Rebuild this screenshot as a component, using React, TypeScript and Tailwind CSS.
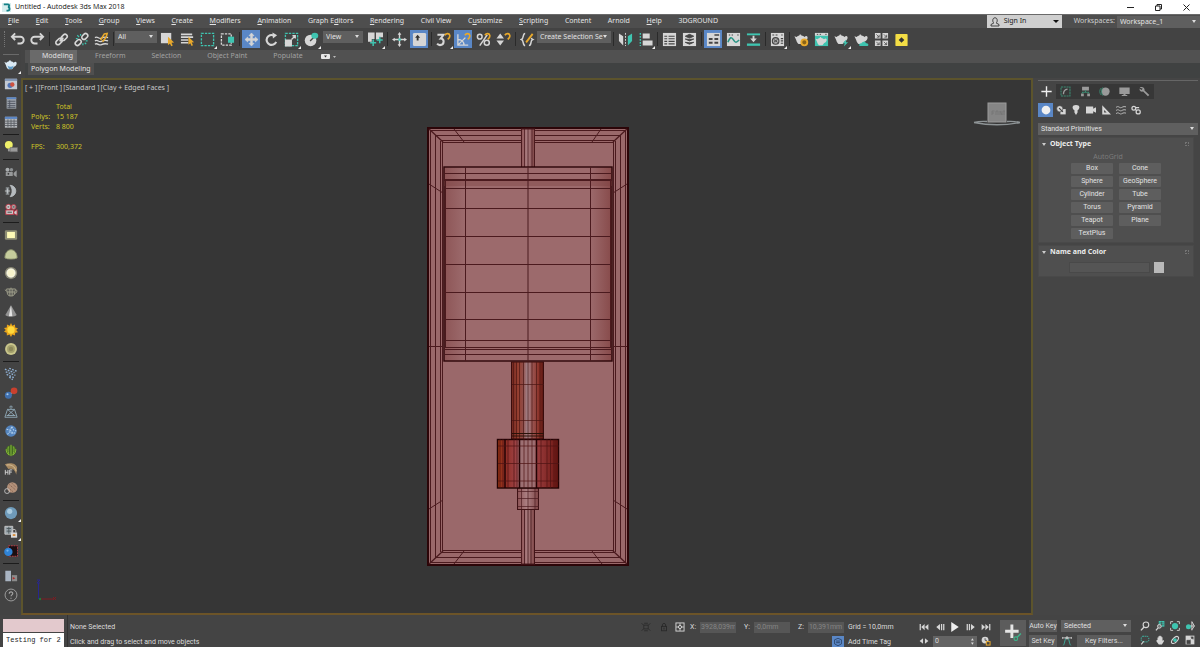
import { useState, type ReactNode } from "react";
import clsx from "clsx";

const UI = "font-['Noto_Sans','Open_Sans',sans-serif]";

const L = "#d6d6d6";
const T = "#3fc4b0";
const Y = "#e8a92c";

/* ---------- icons, all on a 16x16 grid ---------- */

const teapot = (fill: string) => (
  <path
    transform="matrix(1.05 0 0 1.3 -.6 -2.6)"
    d="M1 5.5l2.2.6C4 5.3 5 5 6 4.8c0-1 2-1 2 0 1.500.2 2.600.6 3.200 1.400C13 4.500 15 5.500 14.200 7.500c-.5 1.200-1.600 2-2.900 2.300-.6 1-1.300 1.700-2 2H5.200C4 11 3.200 10 2.800 8.500z"
    fill={fill}
  />
);

const magnet = (
  <path d="M9.500 3.500C11 1 14.500 1.200 14.800 4c.1 1.600-1 2.800-2.300 3.800" fill="none" stroke={Y} strokeWidth="1.800" />
);

const ICONS: Record<string, ReactNode> = {
  undo: <path d="M5.500 1.500L2 5l3.500 3.500M2.500 5H11a3.600 3.600 0 010 7.300H8" fill="none" stroke={L} strokeWidth="2" />,
  redo: <path d="M10.500 1.500L14 5l-3.500 3.500M13.500 5H5a3.600 3.600 0 000 7.300h3" fill="none" stroke={L} strokeWidth="2" />,
  link: (
    <g fill="none" stroke={L} strokeWidth="1.700">
      <rect x="7" y="3.500" width="7.500" height="4.600" rx="2.300" transform="rotate(-45 10.700 5.800)" />
      <rect x="1.500" y="8" width="7.500" height="4.600" rx="2.300" transform="rotate(-45 5.300 10.300)" />
      <path d="M6 10l4-4" />
    </g>
  ),
  unlink: (
    <g fill="none" stroke={L} strokeWidth="1.700">
      <rect x="8" y="2.500" width="7" height="4.600" rx="2.300" transform="rotate(-45 11.500 4.800)" />
      <rect x="1" y="9" width="7" height="4.600" rx="2.300" transform="rotate(-45 4.500 11.300)" />
      <path d="M3.500 3.500l2 2M7 2v2M2 7h2M11.500 11.500l1.500 1.500M9.500 12v2M12.500 9.500h2" stroke={T} strokeWidth="1.300" />
    </g>
  ),
  bindWarp: (
    <g fill="none">
      <path d="M1 6c3-2 4 2 7 .5S12 5 15 6M1 9.500c3-2 4 2 7 .5s4-1.500 7-.5M1 13c3-2 4 2 7 .5s4-1.500 7-.5" stroke={L} strokeWidth="1.400" />
      <path d="M7 8.500l4-6.500 3-.5-1 4-4 5" stroke={Y} strokeWidth="1.700" />
    </g>
  ),
  select: (
    <>
      <rect x="1" y="1" width="11" height="11" fill={L} />
      <path d="M8.500 5l6.500 6.200-2.800.3 1.400 3-1.600.7-1.400-3-2.100 1.900z" fill={Y} />
    </>
  ),
  selectByName: (
    <>
      <path d="M1 2.500h12M1 5.500h13M1 8.500h8M1 11.500h8" stroke={L} strokeWidth="1.700" />
      <path d="M9 5l6 6-2.500.3 1.300 2.900-1.500.7-1.300-2.900-2 1.700z" fill={Y} />
    </>
  ),
  rectRegion: <rect x="1.500" y="1.500" width="13" height="13" fill="none" stroke={T} strokeWidth="1.400" strokeDasharray="2.500 1.200" />,
  windowCross: (
    <>
      <rect x="1.500" y="2" width="10.500" height="12" fill="none" stroke={L} strokeWidth="1.400" strokeDasharray="2.500 1.200" />
      <rect x="8.500" y="5" width="6.500" height="6.500" fill={T} />
    </>
  ),
  move: (
    <path
      d="M8 1l2.700 3H9v3h3V5.300L15 8l-3 2.700V9H9v3h1.700L8 15l-2.700-3H7V9H4v1.700L1 8l3-2.700V7h3V4H5.300z"
      fill={L}
      stroke={L}
      strokeWidth=".6"
    />
  ),
  rotate: (
    <>
      <path d="M10.500 3.700A5.300 5.300 0 1013 10.500" fill="none" stroke={L} strokeWidth="2.200" />
      <path d="M9 .5l5 3-4.500 3.500z" fill={L} />
    </>
  ),
  scale: (
    <>
      <rect x="1.500" y="1.500" width="13" height="13" fill="none" stroke={T} strokeWidth="1.400" strokeDasharray="2.500 1.200" />
      <rect x="1" y="8" width="7.500" height="7.500" fill={L} />
      <path d="M8 8l3.500-3.500M9 4h3v3" fill="none" stroke={L} strokeWidth="1.400" />
    </>
  ),
  place: (
    <>
      <circle cx="7" cy="9" r="6.200" fill={L} />
      <path d="M6.500 9.500l4-4" stroke="#444" strokeWidth="1.500" />
      <ellipse cx="11.500" cy="4" rx="3.700" ry="3.200" fill={T} />
    </>
  ),
  pivot: (
    <>
      <path d="M0 .5h7v7H4v3H0zM8.500.5H16v5h-3.500v2.500h-4z" fill={L} />
      <path d="M5.500 8v7M2.300 11.500h6.400M12.500 5v7M9.300 8.500h6.400" stroke={T} strokeWidth="1.600" />
    </>
  ),
  manipulate: (
    <>
      <path d="M8 2v12M2 8h12" stroke={L} strokeWidth="1.500" />
      <path d="M8 0l2 3H6zM8 16l2-3H6zM0 8l3-2v4zM16 8l-3-2v4z" fill={L} />
      <rect x="6.800" y="6.800" width="2.500" height="2.500" fill={T} />
    </>
  ),
  keyboard: (
    <>
      <rect x="1" y="1" width="14" height="14" rx="1.500" fill={L} />
      <path d="M6 3l2.700 3H7v3H5V6H3.300z" fill="#333" />
    </>
  ),
  snap3: (
    <>
      <path d="M1.500 3h6.500L5 7c4.200-.2 4.400 7-.8 7-1.400 0-2.300-.6-3-1.500" fill="none" stroke={L} strokeWidth="2.200" />
      {magnet}
    </>
  ),
  snapAngle: (
    <>
      <path d="M2 2.500v11.500h11M2 8c4 0 6.500 2.500 6.500 6M2 14l8-8" fill="none" stroke={L} strokeWidth="1.400" />
      {magnet}
    </>
  ),
  snapPercent: (
    <>
      <g fill="none" stroke={L} strokeWidth="1.600">
        <circle cx="4" cy="5" r="2.500" />
        <circle cx="11.500" cy="11.500" r="2.700" />
        <path d="M12 3L4 14.500" />
      </g>
      {magnet}
    </>
  ),
  snapSpinner: (
    <>
      <path d="M4.500 1.500L8.500 7H.5zM4.500 14.500L8.500 9H.5z" fill={L} />
      {magnet}
    </>
  ),
  namedSets: (
    <g fill="none" strokeWidth="1.600">
      <path d="M5.500 1.500C2.500 1.500 4.500 7 1.500 8c3 1 1 6.500 4 6.500M9.500 14.500c3.500 0 1-5.500 4-6.500-.8-.4-1.200-1-1.300-1.800" stroke={L} />
      <path d="M6.500 11L13.500 2" stroke={Y} strokeWidth="2" />
    </g>
  ),
  mirror: (
    <>
      <path d="M1 1.500l4.500 3v10L1 9.500z" fill={L} />
      <path d="M15 1.500l-4.500 3v10L15 9.500z" fill={T} />
      <path d="M8 1v14" stroke={L} strokeDasharray="2 1.200" />
    </>
  ),
  align: (
    <>
      <path d="M2.500 1v14" stroke={T} strokeWidth="1.500" strokeDasharray="2 1.200" />
      <path d="M5 1.500h7.500v5.500H5zM5 9h10.500v5.500H5z" fill={L} />
    </>
  ),
  layers: (
    <>
      <rect x="1" y="1" width="14" height="14" fill={L} />
      <path d="M2.500 4.500h3M7 4.500h6.500M2.500 7.200h3M7 7.200h6.500M2.500 10h3M7 10h6.500M2.500 12.700h3M7 12.700h6.500" stroke="#444" strokeWidth="1.200" />
    </>
  ),
  layerStack: (
    <>
      <rect x="1" y="1" width="14" height="14" fill={L} />
      <path d="M8 2.500l4.500 2L8 6.500l-4.500-2zM3.500 7.500L8 9.500l4.500-2L8 8zM3.500 11L8 13l4.500-2-4.500.5z" fill="#444" stroke="#444" strokeWidth="1" />
    </>
  ),
  ribbon: (
    <>
      <path d="M1 1h14v14H1z" fill={L} />
      <path d="M3 6.500h4v2H3zM9 6.500h4v2H9zM3 10.500h4v2H3zM9 10.500h4v2H9zM9 2.500h5v1.500H9z" fill="#444" />
    </>
  ),
  curve: (
    <>
      <path d="M1 1h14v14H1z" fill={L} />
      <path d="M3 3.200h1.500M6 3.200h1.500M12 3.200h1.500" stroke="#444" strokeWidth="1.200" />
      <path d="M2 11c2.500-6 4-6 6-2.500s3 3 6 0" fill="none" stroke="#2b9484" strokeWidth="1.700" />
    </>
  ),
  schematic: (
    <>
      <path d="M1 2.500h14" stroke={T} strokeWidth="2" />
      <path d="M1 13.500h14" stroke={T} strokeWidth="2.500" />
      <path d="M7 4h2v3h2.500L8 11 4.500 7H7z" fill={L} />
    </>
  ),
  material: (
    <>
      <path d="M1 1h14v14H1z" fill={L} />
      <path d="M2.500 3.200h2M6 3.200h2M12 3.200h1.500M11.500 7h2.500M11.500 9.500h2.500M11.500 12h2.500" stroke="#444" strokeWidth="1.200" />
      <circle cx="6" cy="9.500" r="3.500" fill="#aaa" stroke="#444" strokeWidth="1.200" />
      <path d="M4 8l4 3M4 11l4-3" stroke="#444" />
    </>
  ),
  renderSetup: (
    <>
      {teapot(L)}
      <circle cx="11" cy="11" r="3.200" fill="#8a6417" stroke={Y} strokeWidth="2" />
    </>
  ),
  renderFrame: (
    <>
      <path d="M1 1h14v14H1z" fill={T} />
      <path d="M1 1h14v3H1z" fill={L} />
      <path d="M3 2.500h1.500M6 2.500h1.500M12 2.500h1.500" stroke="#444" />
      <g transform="translate(1.200 3.200) scale(.85)">{teapot(L)}</g>
    </>
  ),
  render: (
    <>
      {teapot(L)}
      <path d="M13 8l-3.500 4h2l-1 3.500 4.500-4.500h-2.200z" fill={T} />
    </>
  ),
  renderCloud: (
    <>
      {teapot(L)}
      <path d="M6 15c-1.500-2.500 1-3.500 2-3 1-2.500 4.500-2 5 0 3 0 3 3 1 3z" fill={T} />
    </>
  ),
  gallery: (
    <>
      <path d="M1 1h6v6H1zM9 1h6v6H9zM1 9h6v6H1zM9 9h6v6H9z" fill={L} />
      <path d="M2.500 2.500l3 3M5.500 3v2.500H3M10.500 2.500l3 3M13.500 3v2.500H11M2.500 10.500l3 3M5.500 11v2.500H3M10.500 10.500l3 3M13.500 11v2.500H11" stroke="#444" fill="none" strokeWidth=".8" />
    </>
  ),
  yellow: (
    <>
      <rect x="1.500" y="2" width="13" height="13" rx="1" fill="#f3dd45" />
      <path d="M8 5.500l3 3-3 3-3-3z" fill="#333" />
    </>
  ),

  /* left bar */
  teapotBlue: <>{teapot("#dcebf5")}<path d="M4 8.500c2 2 5 2 7 0L9.500 12.500h-4z" fill="#5d9cc9" /></>,
  frameBuffer: (
    <>
      <path d="M1 2h14v12H1z" fill="#c3cad4" />
      <path d="M1 2h14v2.500H1z" fill="#8296b5" />
      <circle cx="7" cy="9.500" r="3" fill="#4f74b8" />
      <circle cx="9.500" cy="8.500" r="2.500" fill="#cf5240" />
    </>
  ),
  listPanel: (
    <>
      <path d="M3 1.500h11v13H3z" fill="#9aa0a8" />
      <path d="M3 1.500h11v2H3z" fill="#5c86c4" />
      <path d="M4 6h9M4 8.500h9M4 11h9M4 13h9M6.500 5v9" stroke="#505560" />
    </>
  ),
  gridPanel: (
    <>
      <path d="M1 2h14v12.500H1z" fill="#b3b7bb" />
      <path d="M1 2h14v2.500H1z" fill="#5c86c4" />
      <path d="M1 7h14M1 9.500h14M1 12h14M4.500 5v9M8 5v9M11.500 5v9" stroke="#5a5e64" />
    </>
  ),
  lightList: (
    <>
      <circle cx="5.500" cy="5.500" r="4.500" fill="#eff06a" />
      <path d="M4.500 10h3v3h-3z" fill="#999" />
      <path d="M7 8.500h8.500v5H7z" fill="#9a9a9a" stroke="#666" strokeWidth=".6" />
    </>
  ),
  camera: (
    <>
      <circle cx="4" cy="5.500" r="2.300" fill="#a9adaf" />
      <circle cx="8.500" cy="5.500" r="2" fill="#8b8f91" />
      <path d="M2 8h8v4.500H2zM11 9l3.500-3v8L11 11.500z" fill="#97999a" />
      <circle cx="5" cy="10" r="1" fill="#333" />
    </>
  ),
  dome: (
    <>
      <path d="M2 3.500h4v9H2z" fill="#7c8083" />
      <path d="M7 1.500a6.500 6.500 0 010 13c3-4 3-9 0-13z" fill="#b6bbbf" stroke="#b6bbbf" />
      <path d="M1 8h6M4 5v6" stroke="#c5c9cc" />
    </>
  ),
  cameraRed: (
    <>
      <circle cx="5" cy="4.500" r="3" fill="#d0d0d0" stroke="#b33040" />
      <circle cx="11" cy="4.500" r="2.800" fill="#aaa" stroke="#c23547" />
      <path d="M2 8h9v5H2zM11 10l4-2.500v6.500l-4-2z" fill="#ccc" stroke="#c23547" />
      <path d="M4 4.500h2M10 4.500h2M4 10.500h5" stroke="#333" />
    </>
  ),
  lightPlane: (
    <>
      <rect x="1" y="2.500" width="14" height="11" rx="1.500" fill="#8d8d74" />
      <rect x="3.500" y="4.500" width="9" height="7" fill="#fdfab6" />
    </>
  ),
  lightDome: <path d="M1 12.500C1 0 15 0 15 12.500c-3 1.800-11 1.800-14 0z" fill="#c5cc9c" stroke="#8d926e" />,
  lightSphere: (
    <>
      <circle cx="8" cy="8" r="7" fill="#8e8d78" />
      <circle cx="8" cy="8" r="4.800" fill="#f7f3cc" stroke="#fff" strokeWidth=".8" />
    </>
  ),
  lightMesh: (
    <g fill="none" stroke="#a5a590">
      <path d="M3 4.500h10l-1 6-2 2H6l-2-2zM3 7L1 5.500M13 6c3-1 2 3-1 4M3.500 8h9M6 4.500v8M8 3v9.500M10 4.500v8" />
    </g>
  ),
  cone: (
    <>
      <path d="M8 1.500l6.500 11c-2 2.500-11 2.500-13 0z" fill="#929292" />
      <path d="M8 1.500l1.500 12.500H5.500z" fill="#e4e4e4" />
    </>
  ),
  sun: (
    <>
      <path d="M8 0l1.500 3L12.500 1.700l.3 3.300L16 6l-2 2 2 2.500-3.200.6-.3 3.200-3-1.300L8 16l-1.700-3-3 1.300-.2-3.300L0 10l2-2-2-2.200 3.200-.8.200-3.300L6.500 3z" fill="#e8a51d" />
      <circle cx="8" cy="8" r="4.200" fill="#ffd93b" />
    </>
  ),
  disc: (
    <>
      <circle cx="8" cy="8" r="6.800" fill="#c9c68c" />
      <circle cx="8" cy="8" r="4.500" fill="#a3a06c" />
      <circle cx="8" cy="8" r="2.500" fill="#8b885a" />
    </>
  ),
  particles: (
    <g stroke="#8fb0d4" strokeWidth="1.600" strokeDasharray="2 1.500">
      <path d="M1 2.500l11 4M2 5.500l11 4M3 8.500l9 4M6 1.500l9 3.500M6 11.500l4 3" />
    </g>
  ),
  spheres: (
    <>
      <path d="M5 11l7-6" stroke="#aaa" strokeWidth="2" />
      <circle cx="5" cy="10.500" r="4" fill="#3f6fae" />
      <circle cx="11.500" cy="5.500" r="3.800" fill="#c8402e" />
      <circle cx="4" cy="9.500" r="1.200" fill="#a9cbe8" />
    </>
  ),
  pyramid: (
    <g fill="none" stroke="#93aebd">
      <path d="M8 2v2.500M4 5h8l3 9H1zM4 5l8 7M12 5l-8 7M3 12h10M6 2.500l2-1.500 2 1.500" />
    </g>
  ),
  snowball: (
    <>
      <circle cx="8" cy="8" r="6.500" fill="#5484bd" />
      <path d="M3 6l4 1 2-4M9 3l2 4 3 1M4 12l2-3 4 2 3-1M7 7l3 3" stroke="#b3d0ec" strokeWidth="1.200" fill="none" strokeDasharray="2 1" />
    </>
  ),
  grass: (
    <>
      <ellipse cx="8" cy="8.500" rx="6" ry="6" fill="#426a22" />
      <path d="M8 2v13M5 4c-1 4 0 8 1 10M11 4c1 4 0 8-1 10M2.500 7c0 3 1 5 3 6.500M13.500 7c0 3-1 5-3 6.500" stroke="#8fc03c" fill="none" />
    </>
  ),
  hair: (
    <>
      <path d="M1 2.500c6-2 13-1 14 4l-1 8c-2-7-5-7-9-6.500z" fill="#a88a62" />
      <path d="M3 3.500c5-1 9 1 11 7" stroke="#dac39a" fill="none" />
      <path d="M1.500 9v5.500M4.500 9v5.500M1.500 11.700h3M6.500 14.500V9h3M6.500 11.500h2.500" stroke="#ddd" fill="none" />
    </>
  ),
  ornatrix: (
    <>
      <circle cx="9.500" cy="7.500" r="6" fill="#b3917a" />
      <path d="M6 4l7 6M9 2.500l5 5M5 8l5 4" stroke="#7d5b49" strokeDasharray="1.500 1" />
      <circle cx="3.500" cy="11.500" r="2.800" fill="none" stroke="#c4c4c4" />
    </>
  ),
  glassBall: (
    <>
      <circle cx="8" cy="8" r="7" fill="#6f9bba" />
      <circle cx="6.500" cy="6" r="3" fill="#a9cade" />
    </>
  ),
  locked: (
    <>
      <path d="M1 1.500h9v9H1z" fill="#9aa5ab" stroke="#ccc" />
      <path d="M3 4h5M3 7h5M5.500 2v8" stroke="#4a5558" />
      <path d="M8 8.500h7v6H8z" fill="#dcdcdc" />
      <path d="M9.500 8.500V6.500c0-2 4-2 4 0v2" stroke="#ccc" fill="none" />
      <path d="M10 10.500h3v2h-3z" fill="#d98a33" />
    </>
  ),
  region: (
    <>
      <rect x="5" y="2" width="10.500" height="12" fill="#1b0f12" stroke="#c4404a" strokeDasharray="2 1" />
      <circle cx="5" cy="9" r="4.800" fill="#2f83d6" />
      <circle cx="4" cy="7.500" r="1.300" fill="#6fb2ee" />
    </>
  ),
  convert: (
    <>
      <path d="M1.500 2h6.500v12H1.500z" fill="#a9b4c2" />
      <path d="M9 7h6v7H9z" fill="#8b8b8b" />
      <path d="M10 9l3 1.500-3 1.500z" fill="#b02a2a" />
    </>
  ),
  help: (
    <g fill="none" stroke="#a6a6a6">
      <circle cx="8" cy="8" r="6.800" />
      <path d="M6 6.500c0-3 4.200-2.500 4 0-.2 1.300-2 1.500-2 3M8 11v1.300" strokeWidth="1.300" />
    </g>
  ),

  /* command panel */
  plus: <path d="M8 .5v15M.5 8h15" stroke="#f0f0f0" strokeWidth="2" />,
  modify: (
    <>
      <rect x="1.500" y="1.500" width="13" height="13" fill="none" stroke="#3c8a72" strokeWidth="1.500" strokeDasharray="3 1" />
      <path d="M5 12c0-5 2-7 6-7.500" fill="none" stroke="#9c9c9c" strokeWidth="2" />
    </>
  ),
  hierarchy: (
    <>
      <path d="M3 1h10v5.500H3zM1.500 11h4v4h-4zM10.500 11h4v4h-4z" fill="#9a9a9a" />
      <path d="M8 6v3M3.500 11V9h9v2" fill="none" stroke="#3c8a72" strokeWidth="1.500" />
    </>
  ),
  motion: (
    <>
      <circle cx="9.500" cy="8" r="6" fill="#9a9a9a" />
      <path d="M3 3c-2.500 3-2.500 7 0 10M5.500 2c-2.500 3.500-2.500 8.500 0 12" fill="none" stroke="#3c8a72" strokeWidth="1.300" />
    </>
  ),
  display: <path d="M.5 2h15v9.500h-6V13H12v1.500H4V13h2.500v-1.500h-6z" fill="#9a9a9a" />,
  wrench: <path d="M1 2c4-2 8 1 7 4.500l7 6.500-2 2-7-7C2.500 9 0 6 1 3.500l2.500 2.300L5.500 4z" fill="#9a9a9a" />,
  geometry: <circle cx="8" cy="8" r="7" fill="#f0f0f0" />,
  shapes: (
    <>
      <rect x="7" y="6.500" width="8.500" height="8.500" fill={L} />
      <circle cx="6" cy="6" r="5" fill={L} stroke="#444" />
      <path d="M5 5l6 6" stroke="#444" strokeWidth="2" />
    </>
  ),
  bulb: <path d="M8 0c7 0 6.500 6 2.500 8.500V12L8 16l-2.500-4V8.500C1.500 6 1 0 8 0z" fill={L} />,
  video: <path d="M0 2.500h11.500v3.500L16 3.500v9L11.500 10v3.500H0z" fill={L} />,
  helper: <path d="M2 .5L16 15H2zM5 8v4h4z" fill={L} fillRule="evenodd" />,
  waves: (
    <path d="M0 4c4-4 6 2 9 0s5-1.500 7-1M0 9c4-4 6 2 9 0s5-1.500 7-1M0 14c4-4 6 2 9 0s5-1.500 7-1" fill="none" stroke="#b8b8b8" strokeWidth="1.600" />
  ),
  gears: (
    <g fill="none" stroke={L} strokeWidth="2">
      <circle cx="4.500" cy="5" r="3" />
      <circle cx="11.500" cy="11" r="3.300" />
      <path d="M8 4h5M7 7l2 2" />
    </g>
  ),

  /* status bar */
  isolate: (
    <g fill="none" stroke="#2a2a2a" strokeWidth="1.300">
      <rect x="4.500" y="5" width="7" height="6" />
      <path d="M1 2l3 3M15 2l-3 3M1 14l3-3M15 14l-3-3M5 2h6M5 14h6" />
    </g>
  ),
  lock: (
    <>
      <rect x="4" y="7" width="8" height="7" fill="none" stroke="#2a2a2a" strokeWidth="1.500" />
      <path d="M5.500 7V4.500c0-3 5-3 5 0V7M8 9v3" fill="none" stroke="#2a2a2a" strokeWidth="1.500" />
    </>
  ),
  absolute: (
    <g fill="none" stroke={L} strokeWidth="1.500">
      <rect x="1.500" y="1.500" width="13" height="13" />
      <circle cx="8" cy="8" r="2.500" />
      <path d="M8 2v4M8 10v4M2 8h4M10 8h4" />
    </g>
  ),
  timeTag: (
    <g fill="none" stroke="#233a5c" strokeWidth="1.200">
      <path d="M8 2l5.500 2.500v6.500L8 14l-5.500-3V4.500zM5 6.500h6M5 9h6" />
    </g>
  ),
  toStart: <path d="M1 3h2v10H1zM9 3v10L3.500 8zM15 3v10L9.500 8z" fill={L} />,
  prevKey: <path d="M8 3v10L2 8zM9.500 3h2v10h-2zM13 3h2v10h-2z" fill={L} />,
  play: <path d="M2 0l12 8-12 8z" fill="#eee" />,
  nextKey: <path d="M8 3v10l6-5zM4.500 3h2v10h-2zM1 3h2v10H1z" fill={L} />,
  toEnd: <path d="M13 3h2v10h-2zM7 3v10l5.500-5zM1 3v10l5.500-5z" fill={L} />,
  keyMode: <path d="M6.500 3.500v9L1 8zM9.500 3.500v9L15 8z" fill={L} />,
  clock: (
    <>
      <circle cx="6.500" cy="6.500" r="5.500" fill={L} />
      <path d="M6.500 3.500v3.500h3" stroke="#444" fill="none" strokeWidth="1.300" />
      <rect x="8.500" y="9" width="6" height="5.500" fill="#444" stroke={Y} strokeWidth="1.600" />
    </>
  ),
  setKeys: (
    <>
      <path d="M7 .5v12M1 6.500h12" stroke="#e5e5e5" strokeWidth="2.600" />
      <circle cx="10.500" cy="13" r="1.600" fill="none" stroke="#3db38a" />
      <path d="M11.500 12L15 8.500" stroke="#3db38a" strokeWidth="1.300" />
    </>
  ),
  tangent: (
    <g fill="none" stroke={L} strokeWidth="1.300">
      <path d="M2 15C5 12 4 3 8 3s3 9 6 12" stroke={T} />
      <path d="M1 3h14M1 1.500v3M15 1.500v3M6.500 1.500h3v3h-3z" />
    </g>
  ),
  zoom: (
    <g fill="none" stroke={L} strokeWidth="1.800">
      <circle cx="9.500" cy="6" r="4.500" />
      <path d="M6.500 9.500L1.500 15" strokeWidth="2.200" />
    </g>
  ),
  zoomAll: (
    <>
      <path d="M6 0h9v9H6z" fill={T} />
      <path d="M7 3h7M7 6h7M10.500 1v7" stroke="#444" />
      <circle cx="7" cy="8.500" r="3" fill="#777" stroke={L} strokeWidth="1.400" />
      <path d="M5 11l-3.500 4" stroke={L} strokeWidth="2" />
    </>
  ),
  extents: (
    <>
      <path d="M1 5V1h4M11 1h4v4M15 11v4h-4M5 15H1v-4" fill="none" stroke={L} strokeWidth="1.400" />
      <circle cx="8" cy="8" r="5" fill={T} />
    </>
  ),
  extentsAll: (
    <>
      <path d="M11 1v14M5 8h10M11 1l4 7-4 6" stroke={L} fill="none" strokeWidth="1.500" />
      <circle cx="5.500" cy="9" r="4" fill={T} />
    </>
  ),
  zoomRegion: (
    <>
      <rect x="2" y="2" width="12" height="9" rx="3" fill="none" stroke={T} strokeWidth="1.500" strokeDasharray="2 1.300" />
      <path d="M6 10l-4 5" stroke={L} strokeWidth="1.800" />
    </>
  ),
  pan: <path d="M4 8V4h1.500V2H7V1h2v1h1.500v1.500H12V9l1.500-1 1 1.500L11 15H6L2 9.500 3 8z" fill={L} />,
  orbit: (
    <>
      <ellipse cx="8" cy="8" rx="7" ry="3.500" transform="rotate(-45 8 8)" fill="none" stroke={L} strokeWidth="1.800" />
      <circle cx="8" cy="8" r="3" fill={T} />
    </>
  ),
  maximize: (
    <>
      <path d="M1 1h14v14H1z" fill={L} />
      <path d="M3 8.500h5.500V14H3zM9 3h4v4M13 3L9 7" fill="#444" stroke="#444" />
    </>
  ),
};

function Icon({ name, className = "size-4" }: { name: string; className?: string }) {
  return (
    <svg viewBox="0 0 16 16" className={clsx("shrink-0", className)} aria-hidden="true">
      {ICONS[name]}
    </svg>
  );
}

/* ---------- shared controls ---------- */

interface ToolProps {
  name: string;
  active?: boolean;
  flyout?: boolean;
}

function Tool({ name, active = false, flyout = false }: ToolProps) {
  const [on, setOn] = useState(active);
  return (
    <button
      type="button"
      aria-label={name}
      aria-pressed={on}
      onClick={() => active && setOn(!on)}
      className="relative flex h-5 w-5 shrink-0 items-center justify-center"
    >
      <span className={clsx("flex h-[18px] w-[18px] items-center justify-center", on && "bg-[#5a87c6]")}>
        <Icon name={name} className="size-[15px]" />
      </span>
      {flyout && <Flyout />}
    </button>
  );
}

function Flyout() {
  return (
    <svg viewBox="0 0 3 3" className="absolute right-0 bottom-0 size-[3px]" aria-hidden="true">
      <path d="M3 0v3H0z" fill="#eee" />
    </svg>
  );
}

function Separator() {
  return (
    <span className="flex w-1 shrink-0 justify-center">
      <span className="h-3.5 w-px bg-[#2a2a2a]" />
    </span>
  );
}

interface SelectProps {
  label: string;
  options: string[];
  className?: string;
}

function Select({ label, options, className }: SelectProps) {
  return (
    <div className={clsx("relative h-3 shrink-0", className)}>
      <select
        aria-label={label}
        className="block h-full w-full appearance-none rounded-none bg-[#5f5f5f] pr-2 pl-[3px] text-[7px] leading-3 text-[#e2e2e2] outline-none"
      >
        {options.map((o) => (
          <option key={o}>{o}</option>
        ))}
      </select>
      <svg viewBox="0 0 4 3" className="pointer-events-none absolute top-1 right-1 h-[3px] w-1" aria-hidden="true">
        <path d="M0 0h4L2 3z" fill="#ddd" />
      </svg>
    </div>
  );
}

/* ---------- title, menu, main toolbar ---------- */

function TitleBar() {
  return (
    <header className="flex h-3.5 items-center bg-white text-[7px] text-[#111]">
      <svg viewBox="0 0 10 10" className="mr-1 ml-0.5 size-[9px]" aria-hidden="true">
        <path d="M0 0h10v10H0z" fill="#d7eeee" />
        <path d="M2 1.500h4.500c2 0 2 3 0 3 2.500 0 2.500 4 0 4H5" fill="none" stroke="#137f86" strokeWidth="2" />
      </svg>
      <h1 className="flex-1 font-['Open_Sans',sans-serif]">Untitled - Autodesk 3ds Max 2018</h1>
      <div className="flex gap-[14px] pr-[7px]">
        <button type="button" aria-label="Minimize" className="flex h-3.5 w-3.5 items-center justify-center">
          <svg viewBox="0 0 7 7" className="size-[7px]"><path d="M0 3.500h7" stroke="#222" /></svg>
        </button>
        <button type="button" aria-label="Restore" className="flex h-3.5 w-3.5 items-center justify-center">
          <svg viewBox="0 0 7 7" className="size-[7px]">
            <path d="M.5 2h4.500v4.500H.5zM2 2V.5h4.500V5H5" fill="none" stroke="#222" />
          </svg>
        </button>
        <button type="button" aria-label="Close" className="flex h-3.5 w-3.5 items-center justify-center">
          <svg viewBox="0 0 7 7" className="size-[7px]"><path d="M.5.5l6 6M6.500.5l-6 6" stroke="#222" /></svg>
        </button>
      </div>
    </header>
  );
}

// [label, index of the underlined letter], -1 for none
const MENUS: [string, number][] = [
  ["File", 0], ["Edit", 0], ["Tools", 0], ["Group", 0], ["Views", 0], ["Create", 0],
  ["Modifiers", 0], ["Animation", 0], ["Graph Editors", 7], ["Rendering", 0], ["Civil View", -1],
  ["Customize", 1], ["Scripting", 0], ["Content", -1], ["Arnold", -1], ["Help", 0], ["3DGROUND", -1],
];

function MenuBar() {
  return (
    <nav className="flex h-3.5 items-center border-t border-[#6a6a6a] bg-[#4e4e4e] text-[7px] text-[#e4e4e4]">
      <div className="flex w-[726px] items-center justify-between">
        {MENUS.map(([label, u]) => (
          <button key={label} type="button" className="px-2 whitespace-nowrap">
            {u < 0 ? label : <>{label.slice(0, u)}<u>{label[u]}</u>{label.slice(u + 1)}</>}
          </button>
        ))}
      </div>
      <button type="button" className="ml-auto flex h-[13px] w-[75px] items-center gap-1 bg-[#cfcfcf] px-[3px] text-[#222]">
        <svg viewBox="0 0 10 10" className="size-2.5" aria-hidden="true">
          <path d="M5 .8c3 0 2.500 4.500 1.200 5.200L9 7.500V9H1V7.500L3.800 6C2.500 5.300 2 .8 5 .8z" fill="none" stroke="#333" strokeWidth=".9" />
        </svg>
        <span className="flex-1 text-left">Sign In</span>
        <svg viewBox="0 0 6 3" className="h-[3px] w-1.5" aria-hidden="true"><path d="M0 0h6L3 3z" fill="#111" /></svg>
      </button>
      <span className="pr-0.5 pl-3 text-[#cfcfcf]">Workspaces:</span>
      <Select label="Workspaces" options={["Workspace_1"]} className="w-[83px]" />
    </nav>
  );
}

function MainToolbar() {
  return (
    <div role="toolbar" aria-label="Main toolbar" className="flex h-[22px] items-center bg-[#434343] pl-1">
      <span className="mr-0.5 h-4 w-px border-l border-dotted border-[#777]" />
      <Tool name="undo" />
      <Tool name="redo" />
      <Separator />
      <Tool name="link" />
      <Tool name="unlink" />
      <Tool name="bindWarp" />
      <Separator />
      <Select label="Selection filter" options={["All", "Geometry", "Shapes", "Lights"]} className="mb-1 w-[42px]" />
      <Tool name="select" />
      <Tool name="selectByName" />
      <Tool name="rectRegion" flyout />
      <Tool name="windowCross" />
      <Separator />
      <Tool name="move" active />
      <Tool name="rotate" />
      <Tool name="scale" flyout />
      <Tool name="place" flyout />
      <Select label="Reference coordinate system" options={["View", "Screen", "World"]} className="mx-0.5 mb-1 w-10" />
      <Tool name="pivot" flyout />
      <Separator />
      <Tool name="manipulate" />
      <Tool name="keyboard" active />
      <Separator />
      <Tool name="snap3" flyout />
      <Tool name="snapAngle" active />
      <Tool name="snapPercent" />
      <Tool name="snapSpinner" />
      <Separator />
      <Tool name="namedSets" />
      <Select label="Named selection sets" options={["Create Selection Se"]} className="mb-1 w-[74px]" />
      <Separator />
      <Tool name="mirror" />
      <Tool name="align" flyout />
      <Separator />
      <Tool name="layers" />
      <Tool name="layerStack" />
      <Separator />
      <Tool name="ribbon" active />
      <Tool name="curve" />
      <Tool name="schematic" />
      <Separator />
      <Tool name="material" flyout />
      <Separator />
      <Tool name="renderSetup" />
      <Tool name="renderFrame" />
      <Tool name="render" flyout />
      <Tool name="renderCloud" />
      <Tool name="gallery" />
      <Tool name="yellow" />
    </div>
  );
}

const SIDE_GROUPS = [
  ["teapotBlue", "frameBuffer", "listPanel", "gridPanel"],
  ["lightList"],
  ["camera", "dome", "cameraRed"],
  ["lightPlane", "lightDome", "lightSphere", "lightMesh", "cone", "sun", "disc"],
  ["particles", "spheres", "pyramid", "snowball", "grass", "hair", "ornatrix"],
  ["glassBall", "locked", "region"],
  ["convert", "help"],
];

const SIDE_FLYOUTS = ["teapotBlue", "glassBall", "locked"];

function SideToolbar() {
  return (
    <div role="toolbar" aria-label="Side toolbar" className="flex w-[21px] shrink-0 flex-col items-center bg-[#434343] pt-1">
      <span className="h-px w-4 bg-[#6a6a6a]" />
      {SIDE_GROUPS.map((group, i) => (
        <div key={group[0]} className="flex flex-col items-center">
          {i > 0 && <span className="mt-[3px] mb-0.5 h-px w-4 bg-[#1c1c1c]" />}
          {group.map((name) => (
            <button key={name} type="button" aria-label={name} className="relative flex h-[19px] w-5 items-center justify-center">
              <Icon name={name} className="size-3.5" />
              {SIDE_FLYOUTS.includes(name) && <Flyout />}
            </button>
          ))}
        </div>
      ))}
    </div>
  );
}

function Ribbon() {
  const [tab, setTab] = useState("Modeling");
  return (
    <div className="ml-1">
      <div className="flex h-[13px] items-center bg-[#515151] pl-[5px] text-[7px] text-[#a2a2a2]">
        {["Modeling", "Freeform", "Selection", "Object Paint", "Populate"].map((t) => (
          <button
            key={t}
            type="button"
            onClick={() => setTab(t)}
            className={clsx("mr-2.5 h-full whitespace-nowrap", t === tab ? "bg-[#6a6a6a] pr-1 pl-3 text-[#e0e0e0]" : "px-2")}
          >
            {t}
          </button>
        ))}
        <button type="button" aria-label="Ribbon display" className="flex items-center">
          <svg viewBox="0 0 15 5" className="h-[5px] w-[15px]" aria-hidden="true">
            <rect width="9" height="5" rx="1" fill="#e8e8e8" />
            <path d="M3 1.500h3L4.500 3.500z" fill="#333" />
            <path d="M12 2h3l-1.500 2z" fill="#bbb" />
          </svg>
        </button>
      </div>
      <div className="flex h-[15px] items-start bg-[#404242] pl-[3px]">
        <button type="button" className="h-3 bg-[#4f4f4f] px-[3px] text-[7px] leading-3 text-[#e2e2e2]">
          Polygon Modeling
        </button>
      </div>
    </div>
  );
}

/* ---------- viewport ---------- */

const FRAME_X = [430.5, 435.5, 440.5, 442.5, 613.5, 615.5, 620.5, 625.5];
const BOX_Y = [174.5, 180.5, 181.5, 189.5, 209.5, 237.5, 265.5, 293.5, 320.5, 341.5, 348.5, 350.5, 355.5];

function Model() {
  return (
    <svg viewBox="427 128 202 439" className="h-[439px] w-[202px]" role="img" aria-label="Clay model, front view">
      <defs>
        <linearGradient id="box">
          <stop offset="0" stopColor="#8d5556" />
          <stop offset=".12" stopColor="#9c6a6c" />
          <stop offset=".87" stopColor="#9c6a6c" />
          <stop offset="1" stopColor="#874a4a" />
        </linearGradient>
        <linearGradient id="pipe">
          <stop offset="0" stopColor="#8c5254" />
          <stop offset=".45" stopColor="#ab8083" />
          <stop offset="1" stopColor="#7f4546" />
        </linearGradient>
        <linearGradient id="shaft">
          <stop offset="0" stopColor="#72271f" />
          <stop offset=".2" stopColor="#963f30" />
          <stop offset=".35" stopColor="#8f4a45" />
          <stop offset=".5" stopColor="#a3858c" />
          <stop offset=".65" stopColor="#9a5653" />
          <stop offset=".85" stopColor="#8c3329" />
          <stop offset="1" stopColor="#571510" />
        </linearGradient>
        <linearGradient id="knob">
          <stop offset="0" stopColor="#9a3713" />
          <stop offset=".12" stopColor="#8f2c22" />
          <stop offset=".3" stopColor="#9c4245" />
          <stop offset=".38" stopColor="#9d7073" />
          <stop offset=".6" stopColor="#9d7073" />
          <stop offset=".66" stopColor="#983b3c" />
          <stop offset="1" stopColor="#6d1712" />
        </linearGradient>
      </defs>

      {/* outer frame */}
      <rect x="428" y="129" width="200" height="437" fill="#9a686a" stroke="#2c0508" strokeWidth="2" />
      <g fill="none" stroke="#4b1a1e">
        <path d="M430.500 131v433M435.500 136v422M625.500 131v433M620.500 136v422" />
        {FRAME_X.slice(2, 6).map((x) => (
          <path key={x} d={`M${x} 142V553`} />
        ))}
        <path d="M430 131.500h196M435 136.500h186M441 141.500h174M443 143.500h170M443 551.500h170M441 553.500h174M435 558.500h186M430 563.500h196" />
        <path d="M429 130l14 13M627 130l-14 13M429 565l14-13M627 565l-14-13" strokeWidth="1.300" />
        <path d="M454 130l10 13M601 130l-9 13M429 185l14 9M627 185l-14 9M429 510l14-9M627 510l-14-9M464 552l-10 13M592 552l10 13M429 347.500h14M613 347.500h14" />
      </g>

      {/* top pipe */}
      <rect x="521.500" y="130" width="13" height="39" fill="url(#pipe)" stroke="#4b1a1e" />
      <path d="M524.500 130v38M528 130v38M532 130v38M534.500 130v38" stroke="#4b1a1e" strokeWidth=".8" />

      {/* lamp box */}
      <rect x="444" y="168" width="168" height="194" fill="url(#box)" stroke="#2c0508" strokeWidth="1.400" />
      <rect x="444" y="181" width="168" height="6" fill="#7b3f40" opacity=".35" />
      <g stroke="#4b1a1e">
        {BOX_Y.map((y) => (
          <path key={y} d={`M444 ${y}h168`} />
        ))}
        <path d="M465.500 168v194M528 168v194M590.500 168v194M445.500 181v168M610.500 181v168" />
      </g>

      {/* shaft */}
      <rect x="511.500" y="363" width="32" height="77" fill="url(#shaft)" stroke="#3a0c0c" />
      <path d="M513.500 363v77M516.500 363v77M519.500 363v77M523.500 363v77M528 363v77M532 363v77M536.500 363v77M540 363v77M512 385.500h32M512 421.500h32" stroke="#4b1512" strokeWidth=".7" />
      <path d="M512 434.500h32M512 437h32" stroke="#2a1208" strokeWidth="1.200" />

      {/* lower pipes */}
      <rect x="521.500" y="510" width="13" height="55" fill="url(#pipe)" stroke="#4b1a1e" />
      <path d="M524.500 510v55M528 510v55M531 510v55M534.500 510v55" stroke="#3f1215" strokeWidth=".8" />
      <rect x="517.500" y="489" width="21" height="21.500" fill="url(#pipe)" stroke="#3f1215" />
      <path d="M521.500 489v21M528 489v21M535 489v21M518 492.500h21M518 499.500h21M518 507.500h21" stroke="#4b1a1e" strokeWidth=".7" />

      {/* knob */}
      <rect x="497.500" y="440.500" width="61" height="48.500" fill="url(#knob)" stroke="#230304" strokeWidth="1.400" />
      <path d="M505 440v49M519.500 440v49M536.500 440v49" stroke="#230304" strokeWidth="1.500" />
      <path d="M500 440v49M503 440v49M508 440v49M514 440v49M517 440v49M524 440v49M528 440v49M532 440v49M541 440v49M547 440v49M550.500 440v49M554 440v49M556 440v49M498 447h61M498 464.500h61M498 482h61" stroke="#4e1313" strokeWidth=".7" />
    </svg>
  );
}

function Viewport() {
  return (
    <main className="relative flex min-w-0 flex-1 items-center justify-center border-2 border-[#5c542c] border-b-[#6c5428] bg-[#363636] pl-px">
      <Model />
      <div className="absolute top-[3px] left-[2px] flex gap-px text-[7px] leading-[9px] text-[#c9c9c9]">
        {["[ + ]", "[Front ]", "[Standard ]", "[Clay + Edged Faces ]"].map((t) => (
          <button key={t} type="button">{t}</button>
        ))}
      </div>
      <table className="absolute top-[22px] left-2 text-left text-[7px] leading-[10px] text-[#cfc527]">
        <tbody>
          <tr><td className="w-[25px]" /><th className="font-normal">Total</th></tr>
          <tr><th className="font-normal">Polys:</th><td>15 187</td></tr>
          <tr><th className="font-normal">Verts:</th><td>8 800</td></tr>
          <tr className="h-5 align-bottom"><th className="font-normal">FPS:</th><td>300,372</td></tr>
        </tbody>
      </table>
      {/* view cube */}
      <svg viewBox="0 0 50 26" className="absolute top-[22px] right-[9px] h-[26px] w-[50px]" aria-hidden="true">
        <path d="M2 20.500q23 4.500 46 0M2 20.500q6-1.500 13-1M48 20.500q-6-1.500-13-1" fill="none" stroke="#8e9496" strokeWidth="1.300" />
        <rect x="16" y="1" width="18" height="19" fill="#858585" stroke="#9b9b9b" />
        <path d="M20 9h2.500M20 9v4M20 11h2M24 13V9h2v4M28 13V9l2 4V9M31 9h2M32 9v4" stroke="#747474" fill="none" strokeWidth=".8" />
      </svg>
      {/* world axis */}
      <svg viewBox="0 0 24 24" className="absolute bottom-2.5 left-3 size-6" aria-hidden="true">
        <path d="M3.500 20V4M2 1h3L2 4h3" stroke="#27278e" fill="none" />
        <path d="M4 20h15M18 18l3 3M21 18l-3 3" stroke="#7d1c22" fill="none" />
        <circle cx="5" cy="20" r="1.200" fill="#1f7a3a" />
      </svg>
    </main>
  );
}

/* ---------- command panel ---------- */

const PRIMITIVES = [
  "Box", "Cone", "Sphere", "GeoSphere", "Cylinder", "Tube",
  "Torus", "Pyramid", "Teapot", "Plane", "TextPlus",
];

function Rollout({ title, children }: { title: string; children: ReactNode }) {
  return (
    <section className="mt-0.5 mr-1 border border-[#494949] bg-[#4f4f4f] pb-[3px]">
      <h2 className="flex h-3 items-center gap-1 pr-1 pl-[3px] text-[7px] font-bold text-[#ececec]">
        <svg viewBox="0 0 4 3" className="h-[3px] w-1" aria-hidden="true"><path d="M0 0h4L2 3z" fill="#ccc" /></svg>
        <span className="flex-1">{title}</span>
        <span className="size-1 border border-dotted border-[#757575]" />
      </h2>
      {children}
    </section>
  );
}

function CommandPanel() {
  return (
    <aside className="w-[167px] shrink-0 bg-[#454545] pt-0.5 pr-0.5 pl-[5px]">
      <div className="h-px bg-[#666]" />
      <div className="mt-[3px] flex h-[15px] w-[116px] items-center bg-[#373737]">
        {["plus", "modify", "hierarchy", "motion", "display", "wrench"].map((n, i) => (
          <button
            key={n}
            type="button"
            aria-label={n}
            className={clsx("flex h-full items-center justify-center", i === 0 ? "w-[18px] bg-[#454545]" : "w-5")}
          >
            <Icon name={n} className="size-[11px]" />
          </button>
        ))}
      </div>
      <div className="mt-[3px] mb-1.5 flex h-[15px] items-center">
        {["geometry", "shapes", "bulb", "video", "helper", "waves", "gears"].map((n, i) => (
          <button
            key={n}
            type="button"
            aria-label={n}
            className={clsx("flex h-3.5 w-[15px] items-center justify-center", i === 0 && "bg-[#5a87c6]")}
          >
            <Icon name={n} className="size-2.5" />
          </button>
        ))}
      </div>
      <Select label="Category" options={["Standard Primitives", "Extended Primitives"]} className="w-full font-['Roboto',sans-serif]" />
      <Rollout title="Object Type">
        <p className="mr-4 pt-px text-center text-[7px] leading-3 text-[#7b7b7b]">AutoGrid</p>
        <div className="mx-8 grid grid-cols-2 gap-x-1.5 gap-y-0.5 font-['Roboto',sans-serif] text-[7px] leading-[11px] text-[#e2e2e2]">
          {PRIMITIVES.map((p) => (
            <button key={p} type="button" className="h-[11px] rounded-[1px] bg-[#5e5e5e]">
              {p}
            </button>
          ))}
        </div>
      </Rollout>
      <Rollout title="Name and Color">
        <div className="ml-[30px] flex items-center gap-1 pt-1">
          <input aria-label="Object name" className="h-[11px] w-[81px] border border-[#494949] bg-[#555] px-0.5 text-[7px] text-white outline-none" />
          <button type="button" aria-label="Object color" className="h-[11px] w-2.5 bg-[#b9b9b9]" />
        </div>
      </Rollout>
    </aside>
  );
}

/* ---------- status bar ---------- */

function Coord({ axis, value }: { axis: string; value: string }) {
  return (
    <label className="flex items-center gap-1">
      {axis}:
      <input defaultValue={value} className="h-[11px] w-9 bg-[#565656] px-px text-[7px] text-[#858585] outline-none" />
    </label>
  );
}

function SmallTool({ name, className }: { name: string; className?: string }) {
  return (
    <button type="button" aria-label={name} className={clsx("flex h-3 items-center justify-center", className)}>
      <Icon name={name} className="size-2.5" />
    </button>
  );
}

function StatusBar() {
  return (
    <footer className="flex h-8 shrink-0 items-stretch overflow-hidden bg-[#444] pl-[3px] font-['Roboto',sans-serif] text-[7px] leading-4 text-[#dcdcdc]">
      <div className="mt-1 flex w-[61px] flex-col gap-px">
        <input aria-label="Macro recorder" className="h-[13px] w-full bg-[#e3c9cd] outline-none" />
        <input
          aria-label="MAXScript listener"
          defaultValue="Testing for 2"
          className="h-3.5 w-full bg-white pl-[3px] font-['Liberation_Mono',monospace] text-[7px] text-[#222] outline-none"
        />
      </div>
      <div className="ml-[3px] flex-1 border-l border-[#333] pt-1 pl-0.5">
        <p>None Selected</p>
        <p className="leading-[14px]">Click and drag to select and move objects</p>
      </div>

      <div className="flex w-[278px] flex-col pt-1">
        <div className="flex h-4 shrink-0 items-center">
          <SmallTool name="isolate" className="mr-1.5 w-3" />
          <SmallTool name="lock" className="mr-1 w-3" />
          <SmallTool name="absolute" className="mr-1 w-3" />
          <div className="flex flex-1 items-center gap-2">
            <Coord axis="X" value="3928,039m" />
            <Coord axis="Y" value="-0,0mm" />
            <Coord axis="Z" value="10,391mm" />
          </div>
          <span className="w-[70px]">Grid = 10,0mm</span>
        </div>
        <div className="flex h-3.5 shrink-0 items-center justify-end">
          <button type="button" aria-label="Time tag options" className="mr-1 flex h-3 w-3 items-center justify-center bg-[#5a87c6]">
            <Icon name="timeTag" className="size-2.5" />
          </button>
          <button type="button" className="w-[70px] text-left">Add Time Tag</button>
        </div>
      </div>

      <div className="w-[74px] pt-1">
        <div className="flex h-4 items-center justify-between">
          {["toStart", "prevKey", "play", "nextKey", "toEnd"].map((n) => (
            <SmallTool key={n} name={n} className="w-3" />
          ))}
        </div>
        <div className="flex h-3 items-center justify-between">
          <SmallTool name="keyMode" className="w-3" />
          <div className="flex h-[11px] w-11 items-center bg-[#646464] pr-[3px]">
            <input aria-label="Current frame" defaultValue="0" className="h-full w-full min-w-0 bg-transparent pl-0.5 outline-none" />
            <svg viewBox="0 0 3 7" className="h-[7px] w-[3px]" aria-hidden="true">
              <path d="M0 2.500h3L1.500 0zM0 4.500h3L1.500 7z" fill="#ddd" />
            </svg>
          </div>
          <SmallTool name="clock" className="w-3" />
        </div>
      </div>

      <button type="button" aria-label="Set keys" className="mt-[5px] mb-px ml-2 flex w-[26px] items-center justify-center bg-[#5c5c5c]">
        <Icon name="setKeys" className="size-[18px]" />
      </button>

      <div className="ml-[3px] grid grid-cols-[28px_70px] content-start gap-x-1 gap-y-[3px] pt-[5px] leading-3">
        <button type="button" className="h-3 bg-[#5c5c5c] whitespace-nowrap">Auto Key</button>
        <Select label="Key set" options={["Selected"]} className="w-full" />
        <button type="button" className="h-3 bg-[#5c5c5c] whitespace-nowrap">Set Key</button>
        <div className="flex gap-1">
          <SmallTool name="tangent" className="w-3" />
          <button type="button" className="h-3 flex-1 bg-[#5c5c5c]">Key Filters...</button>
        </div>
      </div>

      <div className="mr-1 ml-2 grid grid-cols-4 content-start gap-x-[3px] gap-y-0.5 pt-[5px]">
        {["zoom", "zoomAll", "extents", "extentsAll", "zoomRegion", "pan", "orbit", "maximize"].map((n) => (
          <SmallTool key={n} name={n} className="w-3" />
        ))}
      </div>
    </footer>
  );
}

export default function App() {
  return (
    <div className={clsx("flex min-h-screen flex-col overflow-hidden bg-[#444]", UI)}>
      <TitleBar />
      <MenuBar />
      <MainToolbar />
      <div className="flex flex-1">
        <SideToolbar />
        <div className="flex min-w-0 flex-1 flex-col">
          <Ribbon />
          <div className="flex flex-1">
            <Viewport />
            <CommandPanel />
          </div>
        </div>
      </div>
      <StatusBar />
    </div>
  );
}
